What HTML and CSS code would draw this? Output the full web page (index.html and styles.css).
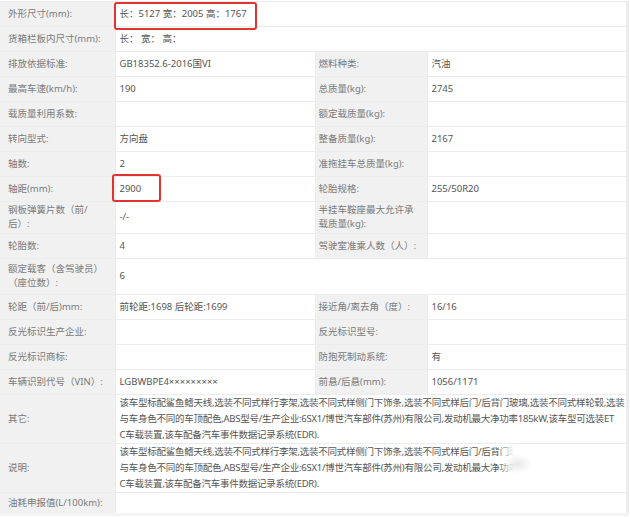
FILE: index.html
```html
<!DOCTYPE html>
<html lang="zh-CN">
<head>
    <meta charset="UTF-8">
    <title>车辆参数</title>
    <link rel="stylesheet" href="styles.css">
</head>
<body>
    <table class="spec">
        <colgroup>
            <col class="c-label">
            <col class="c-value">
            <col class="c-label2">
            <col class="c-value2">
        </colgroup>
        <tr>
            <th>外形尺寸(mm):</th>
            <td colspan="3" class="mark-cell">长：5127 宽：2005 高：1767<span class="mark mark-size"></span></td>
        </tr>
        <tr>
            <th>货箱栏板内尺寸(mm):</th>
            <td colspan="3">长：&nbsp;宽：&nbsp;高：</td>
        </tr>
        <tr>
            <th>排放依据标准:</th>
            <td>GB18352.6-2016国VI</td>
            <th>燃料种类:</th>
            <td>汽油</td>
        </tr>
        <tr>
            <th>最高车速(km/h):</th>
            <td>190</td>
            <th>总质量(kg):</th>
            <td>2745</td>
        </tr>
        <tr>
            <th>载质量利用系数:</th>
            <td></td>
            <th>额定载质量(kg):</th>
            <td></td>
        </tr>
        <tr>
            <th>转向型式:</th>
            <td>方向盘</td>
            <th>整备质量(kg):</th>
            <td>2167</td>
        </tr>
        <tr>
            <th>轴数:</th>
            <td>2</td>
            <th>准拖挂车总质量(kg):</th>
            <td></td>
        </tr>
        <tr>
            <th>轴距(mm):</th>
            <td class="mark-cell">2900<span class="mark mark-base"></span></td>
            <th>轮胎规格:</th>
            <td>255/50R20</td>
        </tr>
        <tr class="multi">
            <th>钢板弹簧片数（前/后）:</th>
            <td>-/-</td>
            <th>半挂车鞍座最大允许承载质量(kg):</th>
            <td></td>
        </tr>
        <tr>
            <th>轮胎数:</th>
            <td>4</td>
            <th>驾驶室准乘人数（人）:</th>
            <td></td>
        </tr>
        <tr class="multi seats">
            <th>额定载客（含驾驶员）（座位数）:</th>
            <td colspan="3">6</td>
        </tr>
        <tr>
            <th>轮距（前/后)mm:</th>
            <td>前轮距:1698 后轮距:1699</td>
            <th>接近角/离去角（度）:</th>
            <td>16/16</td>
        </tr>
        <tr>
            <th>反光标识生产企业:</th>
            <td></td>
            <th>反光标识型号:</th>
            <td></td>
        </tr>
        <tr>
            <th>反光标识商标:</th>
            <td></td>
            <th>防抱死制动系统:</th>
            <td>有</td>
        </tr>
        <tr>
            <th>车辆识别代号（VIN）:</th>
            <td>LGBWBPE4×××××××××</td>
            <th>前悬/后悬(mm):</th>
            <td>1056/1171</td>
        </tr>
        <tr class="long">
            <th>其它:</th>
            <td colspan="3">该车型标配鲨鱼鳍天线,选装不同式样行李架,选装不同式样侧门下饰条,选装不同式样后门/后背门玻璃,选装不同式样轮毂,选装<br>与车身色不同的车顶配色,ABS型号/生产企业:6SX1/博世汽车部件(苏州)有限公司,发动机最大净功率185kW,该车型可选装ET<br>C车载装置,该车配备汽车事件数据记录系统(EDR).</td>
        </tr>
        <tr class="long">
            <th>说明:</th>
            <td colspan="3" class="mark-cell">该车型标配鲨鱼鳍天线,选装不同式样行李架,选装不同式样侧门下饰条,选装不同式样后门/后背门玻璃,选装不同式样轮毂,选装<br>与车身色不同的车顶配色,ABS型号/生产企业:6SX1/博世汽车部件(苏州)有限公司,发动机最大净功率185kW,该车型可选装ET<br>C车载装置,该车配备汽车事件数据记录系统(EDR).<span class="smudge"></span></td>
        </tr>
        <tr class="last">
            <th>油耗申报值(L/100km):</th>
            <td colspan="3"></td>
        </tr>
    </table>
</body>
</html>
```

FILE: styles.css
```css
body {
    margin: 0;
    background-color: #fff;
    font-family: "Noto Sans", "Noto Sans CJK SC", sans-serif;
    font-size: 9.5px;
}

.spec {
    width: 627px;
    border-collapse: collapse;
    table-layout: fixed;
    margin-top: 1px;
    border-right: 3px solid #ececec;
    border-bottom: 3px solid #f4f4f4;
}

.c-label { width: 115px; }
.c-value { width: 200px; }
.c-label2 { width: 112px; }
.c-value2 { width: 200px; }

.spec th,
.spec td {
    height: 24px;
    padding: 0 9px 0 8px;
    line-height: 14px;
    border: 1px solid #ececec;
    border-left: none;
    text-align: left;
    vertical-align: middle;
    font-weight: normal;
}

.spec th {
    background-color: #f1f1f1;
    color: #7a7a7a;
}

/* second label column sits tighter */
.spec td + th {
    padding-left: 3px;
    padding-right: 4px;
}

.spec td {
    background-color: #fff;
    color: #555;
    padding-left: 4px;
    padding-right: 4px;
}

.spec .multi th,
.spec .multi td {
    padding-top: 1px;
    padding-bottom: 2px;
}

.spec .seats th,
.spec .seats td {
    padding-top: 3px;
    padding-bottom: 4px;
}

.spec .long th,
.spec .long td {
    padding-top: 0;
    padding-bottom: 0;
}

.spec .long td {
    white-space: nowrap;
    overflow: hidden;
    line-height: 16px;
    letter-spacing: -0.25px;
}

.spec .last th,
.spec .last td {
    height: 20px;
}

.mark-cell {
    position: relative;
}

.mark {
    position: absolute;
    border: 2px solid #e23333;
    border-radius: 3px;
}

.mark-size {
    left: -2px;
    top: 0;
    width: 139px;
    height: 24px;
}

.mark-base {
    left: -4px;
    top: -3px;
    width: 45px;
    height: 24px;
}

.smudge {
    position: absolute;
    left: 382px;
    top: -2px;
    width: 130px;
    height: 48px;
    background:
        radial-gradient(ellipse 14px 10px at 20px 22px, rgba(190, 190, 190, 0.35), rgba(255, 255, 255, 0)),
        linear-gradient(to right, rgba(255, 255, 255, 0), #fff 16px);
}
```
